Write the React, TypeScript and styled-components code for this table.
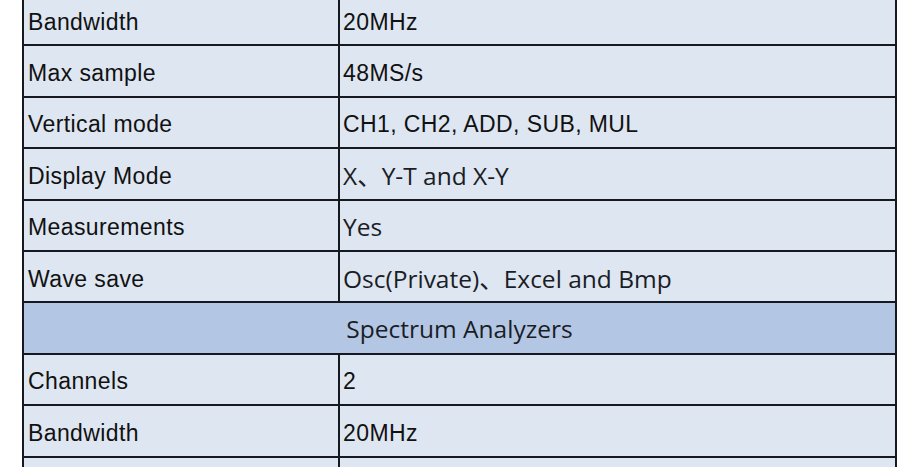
import React from 'react';
import styled, { createGlobalStyle } from 'styled-components';

const GlobalStyle = createGlobalStyle`
  html, body {
    margin: 0;
    padding: 0;
    background: #ffffff;
  }
`;

const LINE = '#161a20';

// Spec sheet table, cropped by the frame
const Page = styled.div`
  width: 920px;
  height: 467px;
  overflow: hidden;
  padding-left: 22px;
  box-sizing: border-box;
`;

const Table = styled.div`
  width: 875px;
  margin-top: -5px;
  box-sizing: border-box;
  border-left: 2px solid ${LINE};
  border-right: 2px solid ${LINE};
  display: flex;
  flex-direction: column;
`;

const Row = styled.div`
  display: grid;
  grid-template-columns: 316px 1fr;
  height: 51.4px;
  flex-shrink: 0;
  box-sizing: border-box;
  border-bottom: 2px solid ${LINE};
  background: #dee6f1;
`;

const SectionRow = styled.div`
  height: 51.4px;
  flex-shrink: 0;
  box-sizing: border-box;
  border-bottom: 2px solid ${LINE};
  background: #b3c7e4;
  display: flex;
  align-items: center;
  justify-content: center;
  font-family: 'Open Sans', 'Noto Sans CJK SC', sans-serif;
  font-size: 24.5px;
  color: #1a1d26;
  padding-top: 1px;
`;

const Cell = styled.div<{ $alt?: boolean; $divider?: boolean }>`
  display: flex;
  align-items: center;
  padding-left: ${(p) => (p.$divider ? '4px' : '3px')};
  padding-top: ${(p) => (p.$alt ? '2px' : '5px')};
  border-right: ${(p) => (p.$divider ? `2px solid ${LINE}` : 'none')};
  font-family: ${(p) =>
    p.$alt
      ? "'Open Sans', 'Noto Sans CJK SC', sans-serif"
      : "'Liberation Sans', Arial, sans-serif"};
  font-size: ${(p) => (p.$alt ? '24.5px' : '23px')};
  letter-spacing: ${(p) => (p.$alt ? '0' : '0.4px')};
  color: ${(p) => (p.$alt ? '#1a1d26' : '#111111')};
  white-space: nowrap;
`;

type Spec =
  | { kind: 'row'; label: string; value: string; alt?: boolean }
  | { kind: 'section'; title: string };

const specs: Spec[] = [
  { kind: 'row', label: 'Bandwidth', value: '20MHz' },
  { kind: 'row', label: 'Max sample', value: '48MS/s' },
  { kind: 'row', label: 'Vertical mode', value: 'CH1, CH2, ADD, SUB, MUL' },
  { kind: 'row', label: 'Display Mode', value: 'X、Y-T and X-Y', alt: true },
  { kind: 'row', label: 'Measurements', value: 'Yes', alt: true },
  { kind: 'row', label: 'Wave save', value: 'Osc(Private)、Excel and Bmp', alt: true },
  { kind: 'section', title: 'Spectrum Analyzers' },
  { kind: 'row', label: 'Channels', value: '2' },
  { kind: 'row', label: 'Bandwidth', value: '20MHz' },
  { kind: 'row', label: '', value: '' },
];

const App: React.FC = () => (
  <>
    <GlobalStyle />
    <Page>
      <Table>
        {specs.map((s, i) =>
          s.kind === 'section' ? (
            <SectionRow key={i}>{s.title}</SectionRow>
          ) : (
            <Row key={i}>
              <Cell $divider>{s.label}</Cell>
              <Cell $alt={s.alt}>{s.value}</Cell>
            </Row>
          )
        )}
      </Table>
    </Page>
  </>
);

export default App;
